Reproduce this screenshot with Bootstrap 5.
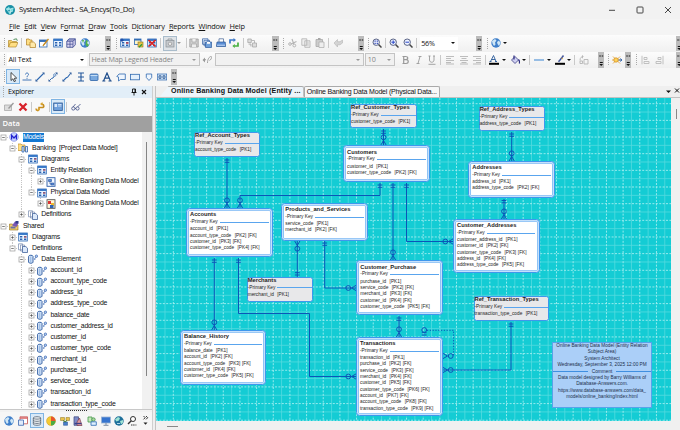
<!DOCTYPE html>
<html lang="en">
  <head>
    <meta charset="UTF-8" />
    <meta name="viewport" content="width=device-width, initial-scale=1.0" />
    <title>System Architect - SA_Encys(To_Do)</title>
    <link
      href="https://cdn.jsdelivr.net/npm/bootstrap@5.3.3/dist/css/bootstrap.min.css"
      rel="stylesheet"
    />
    <style>
      body {
        width: 680px;
        height: 430px;
        background: #f4f4f4;
        color: #111;
        font-family: "Open Sans", "Noto Sans", sans-serif;
        font-size: 7.6px;
        line-height: 1;
      }

      svg {
        display: block;
        flex: none;
      }

      .title-bar {
        height: 19px;
        padding-left: 5px;
        background: #f2f2f2;
        font-size: 7.75px;
        letter-spacing: -0.34px;
      }

      .window-buttons {
        gap: 18px;
        padding-right: 7px;
      }

      .menu-row {
        height: 16px;
        padding-left: 9px;
        gap: 4.2px;
        font-size: 7.4px;
        letter-spacing: -0.19px;
      }

      .menu-row u {
        text-underline-offset: 1px;
        text-decoration-thickness: 0.6px;
      }

      .tool-row {
        height: 16.5px;
        background: linear-gradient(#fcfcfc, #f0f0f0);
      }

      .tool-row.spaced {
        height: 17.5px;
        background: #f6f6f6;
      }

      .tool {
        flex: none;
      }

      .tool.picked,
      .tool.picked-gray {
        height: 13px;
        background: #d8e9f8;
        outline: 0.7px solid #7fb4e3;
      }

      .tool.picked-gray {
        background: #dfe3e7;
        outline-color: #a9bccb;
      }

      .grip {
        height: 11px;
        border-left: 1.2px dotted #a9a9a9;
      }

      .rule {
        height: 10px;
        border-left: 0.8px solid #c9c9c9;
      }

      .more {
        height: 15.5px;
        background: #bcbcbc;
      }

      .caret {
        border: 2px solid transparent;
        border-top: 2.6px solid #111;
        border-bottom: 0;
      }

      .caret.off {
        border-top-color: #999;
      }

      .combo {
        height: 13px;
        padding: 0 3px 0 1.5px;
        background: #fff;
        font-size: 7.2px;
        letter-spacing: -0.17px;
      }

      .combo.off {
        border: 0.8px solid #c4c4c4;
        background: #f1f1f1;
        color: #858585;
      }

      .explorer {
        width: 153px;
        border-right: 1px solid #cfcfcf;
      }

      .gutter {
        width: 3px;
        background: #efefef;
        border-right: 1px solid #c3c3c3;
      }

      .explorer-head {
        height: 12px;
        padding: 0 4px 0 3px;
        background: #e2eef8;
        font-size: 7.2px;
        letter-spacing: -0.3px;
      }

      .explorer-tools {
        height: 18px;
        background: #f8f8f8;
      }

      .data-head {
        height: 16px;
        padding-left: 2.5px;
        background: #a0a0a0;
        color: #fff;
        font-size: 7.6px;
        font-weight: 600;
      }

      .tree {
        height: 277px;
        background: #fff;
        font-family: "Liberation Sans", Arial, sans-serif;
        font-size: 6.9px;
        letter-spacing: -0.2px;
      }

      .tree-row {
        height: 11.13px;
        flex: none;
      }

      .guide,
      .knot {
        width: 9.2px;
        flex: none;
        height: 100%;
      }

      .tree-row .label {
        padding: 1px 0.3px;
      }

      .tree-row .icon-cell {
        padding-right: 3.4px;
      }

      .tree-row .label.chosen {
        background: #1479d2;
        color: #fff;
      }

      .tree-scroll {
        width: 10px;
        background: #f1f1f1;
        padding: 10px 0 0 4px;
      }

      .tree-scroll div {
        width: 1.2px;
        height: 234px;
        background: #858585;
      }

      .splitter {
        height: 3px;
        border-top: 0.8px solid #c8c8c8;
        background: #f2f2f2;
      }

      .splitter div {
        width: 21px;
        border-top: 1.4px dotted #333;
      }

      .module-bar {
        background: #f6f6f6;
      }

      .tab-strip {
        height: 12px;
        padding-left: 4px;
        background: #efefef;
        border-bottom: 1px solid #c2c2c2;
        font-family: "Liberation Sans", Arial, sans-serif;
        font-size: 7px;
      }

      .doc-tab {
        height: 11px;
        border: 0.8px solid #aaa;
        border-bottom: 0;
        border-radius: 2px 2px 0 0;
        background: #f8f8f8;
        white-space: nowrap;
        padding: 0 2px;
        letter-spacing: -0.19px;
      }

      .doc-tab.front {
        background: #eef5fb;
        border-left: 0;
        clip-path: polygon(9px 0, 100% 0, 100% 100%, 0 100%);
        padding-left: 11px;
        font-weight: 700;
        font-size: 7.1px;
        letter-spacing: 0.16px;
      }

      .board {
        width: 515px;
        height: 323px;
        background: #14ccd4;
        font-family: "Liberation Sans", Arial, sans-serif;
        overflow: hidden;
      }

      .side-strip {
        width: 9px;
        padding: 11px 0 0 4.5px;
        background: #f0f0f0;
      }

      .side-strip div {
        width: 1px;
        height: 10px;
        background: #888;
      }

      .foot-strip {
        background: #f0f0f0;
        padding: 5px 0 0 11px;
      }

      .foot-strip div {
        width: 11px;
        height: 1px;
        background: #888;
      }

      .entity {
        border: 0.8px solid #3f97ec;
        border-radius: 3.5px;
        background: #fff;
        box-shadow: inset 0 0 0 1.4px #c5e0fb, inset 0 0 0 2px #6cb0f2;
        padding: 2.6px 3.2px 0 3px;
        color: #1c1c1c;
        font-size: 4.75px;
        white-space: nowrap;
      }

      .entity.lookup {
        background: #e8e8ea;
        box-shadow: none;
        border-radius: 2.5px;
        padding: 0;
      }

      .entity.lookup .name {
        margin-top: -0.8px;
      }

      .entity .name {
        height: 7.9px;
        line-height: 7.9px;
        font-size: 5.75px;
        font-weight: 700;
      }

      .entity .key {
        height: 6.6px;
        line-height: 6.6px;
        font-size: 4.8px;
      }

      .entity .key::after {
        content: "";
        flex: 1;
        margin-left: 2px;
        border-top: 0.9px solid #5aa5ee;
      }

      .entity .field {
        height: 6.35px;
        line-height: 6.35px;
        word-spacing: 0.4px;
      }

      .entity .field:nth-child(3) {
        margin-top: 0.5px;
      }

      .note {
        border: 0.8px solid #58a2ea;
        background: #abcff8;
        font-size: 4.75px;
        line-height: 6.4px;
        color: #1e2f4c;
      }

      .note .divider::before,
      .note .divider::after {
        content: "";
        flex: 1;
        border-top: 0.9px solid #3f8fe0;
      }
    </style>
  </head>
  <body class="d-flex flex-column overflow-hidden m-0">
    <header>
      <div class="title-bar d-flex align-items-center justify-content-between">
        <div class="d-flex align-items-center">
          <svg class="me-1" width="10" height="10" viewBox="0 0 10 10"><circle cx="5" cy="5" r="5" fill="#188fa5"/><path d="M1 4L4 1.5 5 4 2.5 6zM5 4l3.5-1L8 6 5.5 7zM3 7l2.5 0L5 9.5z" fill="#7bdde0"/><path d="M1 4l4 0 3.500-1M5 4l.5 3L5 9.500M2.500 6L5.500 7 8 6" stroke="#e9ffff" stroke-width=".6" fill="none"/></svg>
          <span>System Architect - SA_Encys(To_Do)</span>
        </div>
        <div class="window-buttons d-flex align-items-center">
          <svg width="10" height="8" viewBox="0 0 10 8"><path d="M2 4.3h6" stroke="#333" stroke-width=".9"/></svg>
          <svg width="10" height="8" viewBox="0 0 10 8"><rect x="2" y="1" width="6" height="6" rx=".8" fill="none" stroke="#333" stroke-width=".9"/></svg>
          <svg width="10" height="8" viewBox="0 0 10 8"><path d="M2 1l6 6M8 1L2 7" stroke="#333" stroke-width=".9"/></svg>
        </div>
      </div>
      <nav class="menu-row d-flex align-items-center">
        <span><u>F</u>ile</span><span><u>E</u>dit</span><span><u>V</u>iew</span>
        <span>F<u>o</u>rmat</span><span><u>D</u>raw</span><span><u>T</u>ools</span>
        <span>D<u>i</u>ctionary</span><span><u>R</u>eports</span><span><u>W</u>indow</span><span><u>H</u>elp</span>
      </nav>
      <div class="tool-row d-flex align-items-center" data-tools="standard"></div>
      <div class="tool-row d-flex align-items-center" data-tools="format"></div>
      <div class="tool-row spaced d-flex align-items-center" data-tools="draw"></div>
    </header>

    <main class="d-flex flex-grow-1">
      <aside class="explorer d-flex flex-column">
        <div class="explorer-head d-flex align-items-center">
          <div class="grip"></div>
          <span class="ps-1">Explorer</span>
          <svg class="ms-auto" width="18" height="8" viewBox="0 0 18 8"><path d="M2.500 1h3v3.500h-3zM1.500 4.500h5M4 4.500V7.500M5 1v3.500" stroke="#111" stroke-width=".9" fill="none"/><path d="M12 2l4 4M16 2l-4 4" stroke="#111" stroke-width="1.1"/></svg>
        </div>
        <div class="explorer-tools d-flex align-items-center" data-tools="explorer"></div>
        <div class="data-head d-flex align-items-center">Data</div>
        <div class="tree d-flex">
          <div class="flex-grow-1 overflow-hidden" id="tree"></div>
          <div class="tree-scroll"><div></div></div>
        </div>
        <div class="splitter d-flex justify-content-center"><div></div></div>
        <div class="module-bar d-flex align-items-center flex-grow-1" data-tools="modules"></div>
      </aside>
      <div class="gutter"></div>
      <section class="flex-grow-1 d-flex flex-column">
        <div class="tab-strip d-flex align-items-end">
          <div class="doc-tab front d-flex align-items-center">Online Banking Data Model (Entity ...</div>
          <div class="doc-tab d-flex align-items-center">Online Banking Data Model (Physical Data...</div>
          <svg class="ms-auto align-self-center" width="17" height="8" viewBox="0 0 17 8"><path d="M3 3.500h5L5.500 6z" fill="#111"/><path d="M12 1.500l4 4M16 1.500l-4 4" stroke="#111" stroke-width="1"/></svg>
        </div>
        <div class="d-flex">
          <div class="board position-relative" id="board"></div>
          <div class="side-strip"><div></div></div>
        </div>
        <div class="foot-strip flex-grow-1"><div></div></div>
      </section>
    </main>

    <script src="https://cdn.jsdelivr.net/npm/bootstrap@5.3.3/dist/js/bootstrap.bundle.min.js"></script>
    <script>
      // every glyph is drawn in a 10x10 box
      const grid = '<rect x=".7" y="1" width="8.6" height="8" fill="#eaf4ff" stroke="#2866b4" stroke-width=".8"/><path d="M.7 2h8.6" stroke="#2a6fc4" stroke-width="1.8"/><path d="M2 4.8h2.3M6 4.8h2.3M2 7.3h2.3M6 7.3h2.3" stroke="#2b62b0" stroke-width="1.4"/>';
      const lens = '<path d="M6.3 6.3L9.5 9.5" stroke="#444" stroke-width="1.5"/><circle cx="4.2" cy="4.2" r="3.2" fill="#eef3ff" stroke="#4a5478" stroke-width=".9"/>';
      const globe = '<circle cx="5" cy="5" r="4.7" fill="#3f7fca"/><path d="M1 3l3-2 1.5 1.5L4 4.5l.5 2L3 8 1.5 5.5zM6 4l2-1.5L9.5 5 8 8 6.5 6z" fill="#cfe6f5"/>';
      const icons = {
        folder: '<path d="M.5 9V2.5h3l1 1h4V5" fill="#f3cf6b" stroke="#a97d1c" stroke-width=".6"/><path d="M.5 9l2-4.5H10L8 9z" fill="#ffdf85" stroke="#a97d1c" stroke-width=".6"/><path d="M5.5 1.5l3-.7.8 2" fill="none" stroke="#2f7a3a" stroke-width=".8"/>',
        copyFolder: '<path d="M.5 7V1h2.5l.8 1H6v5z" fill="#ffdf85" stroke="#b08022" stroke-width=".7"/><path d="M4 9.5V4h3.500l2 1.800v3.700z" fill="#ffe9a8" stroke="#b08022" stroke-width=".7"/>',
        edit: '<rect x=".5" y="2" width="7.5" height="7" fill="#fff" stroke="#2866b4" stroke-width=".8"/><path d="M.5 3h7.500" stroke="#2866b4" stroke-width="1.8"/><path d="M9.500 1L5 6.500 4 8" stroke="#c78a1c" stroke-width="1.3"/>',
        grid: grid,
        cube: '<path d="M.8 3.300L3 .8h6.300v6L7 9.300H.8z" fill="#d8d3f0" stroke="#39498f" stroke-width=".8"/><path d="M.8 3.300H7v6M7 3.300L9.300.8M4 3.300v6M.8 6.200H7M2 2h6.500" stroke="#39498f" stroke-width=".7" fill="none"/>',
        world: globe + '<path d="M6 2l2 1-1 2 2 2-2 2-1.500-2.500z" fill="#55b34a"/><path d="M2 2l2 0-1 3z" fill="#55b34a"/>',
        globe: globe,
        gridStar: grid + '<path d="M2 .5v3.500M.3 2.200h3.500" stroke="#1a3d9a" stroke-width=".9"/><path d="M6 5h2.500" stroke="#d33" stroke-width="1.2"/>',
        gridGo: '<rect x=".5" y="1" width="6.5" height="5.5" fill="#fff5c9" stroke="#2866b4" stroke-width=".8"/><path d="M.5 1.800h6.500" stroke="#2866b4" stroke-width="1.4"/><rect x="4" y="4" width="5" height="5" fill="#e7c44c" stroke="#8e7317" stroke-width=".6"/><path d="M5 9.300l3-3" stroke="#2d9a3a" stroke-width="1.3"/>',
        gridDrop: grid + '<path d="M1.500 2l7 6.500M8.500 2l-7 6.500" stroke="#d22" stroke-width="1.7"/>',
        camera: '<rect x="1" y="2.5" width="8" height="6.5" fill="#c6cace" stroke="#8b9298" stroke-width=".7"/><path d="M3 2.500V1h4v1.500" stroke="#8b9298" fill="none" stroke-width=".8"/><circle cx="5" cy="5.8" r="1.7" fill="#eee" stroke="#888" stroke-width=".6"/>',
        save: '<path d="M.8 1h8.400v8H.8z" fill="#cfcfcf" stroke="#9c9c9c" stroke-width=".8"/><path d="M3 1v3h4V1M2.500 9V6h5v3" fill="#eee" stroke="#9c9c9c" stroke-width=".6"/>',
        saveAll: '<path d="M.5.8h5.500v5.500H.5zM2 2.300h5.500v5.500H2z" fill="#e5effc" stroke="#2d5a9d" stroke-width=".7"/><path d="M3.500 4h6v5.500h-6z" fill="#6f9fd8" stroke="#2d5a9d" stroke-width=".7"/><path d="M5 4v1.800h3V4" fill="#fff"/>',
        print: '<path d="M3 4V.8h4.500V4" fill="#fff" stroke="#3d5f92" stroke-width=".7"/><path d="M1 4h8.200l.5 4.500H.4z" fill="#5b8fd6" stroke="#2b5796" stroke-width=".7"/><path d="M1 7.200h8" stroke="#ddecff" stroke-width=".8"/>',
        refresh: '<path d="M1 5.500V2h4" stroke="#3d78c8" stroke-width="1.7" fill="none"/><path d="M9 4.500V8H5.500" stroke="#48b040" stroke-width="1.7" fill="none"/><path d="M4.500 0l2.500 2-2.500 2z" fill="#3d78c8"/><path d="M5.800 6L3.300 8l2.500 2z" fill="#48b040"/>',
        parts: '<path d="M.8 1h3.500v3.500H.8zM5.500 5h4v4h-4zM1.500 6h2.500v2.500" fill="#ddd" stroke="#aaa" stroke-width=".8"/><path d="M4.500 2.500h3V5" stroke="#aaa" stroke-width=".8" fill="none"/>',
        cut: '<path d="M4 1l1.800 5M8.500 3.500L3 6" stroke="#b4b4b4" stroke-width="1.1"/><circle cx="6.3" cy="7.5" r="1.4" fill="none" stroke="#b4b4b4"/><circle cx="2" cy="6" r="1.3" fill="none" stroke="#b4b4b4"/>',
        copy: '<path d="M.8.8h5v6.500h-5zM3.800 2.800h5.200v6.500H3.800z" fill="#eee" stroke="#b0b0b0" stroke-width=".8"/><path d="M5 5h3M5 7h3" stroke="#bbb" stroke-width=".7"/>',
        paste: '<path d="M1 1.500h6.500v7H1z" fill="#ccc" stroke="#aaa" stroke-width=".8"/><path d="M3 .8h2.500" stroke="#999" stroke-width="1.3"/><path d="M4 4h5v5.500H4z" fill="#eee" stroke="#aaa" stroke-width=".7"/>',
        undo: '<path d="M1 5l3.500-3.500v2.200h2.500L9.500 2v3L7 6.800H4.500V9z" fill="#d4d4d4" stroke="#b5b5b5" stroke-width=".6"/>',
        zoomFit: lens + '<path d="M2.500 2.500h1.200v1.200H2.500zM4.700 2.500h1.200v1.200H4.700zM2.500 4.700h1.200v1.200H2.500zM4.700 4.700h1.200v1.200H4.700z" fill="#3046b8"/>',
        zoomIn: lens + '<path d="M2.400 4.200H6M4.200 2.400V6" stroke="#2946c8" stroke-width="1"/>',
        zoomOut: lens + '<path d="M2.400 4.200H6" stroke="#2946c8" stroke-width="1"/>',
        brush: '<path d="M.5 5l2.500-2.500v5zM3 4h1v2" fill="#999"/><path d="M5.500 8c0-4 2-6.500 3.500-6.500S9 5 7.500 5.500" fill="none" stroke="#999" stroke-width=".9"/>',
        bold: '<path d="M2.500 1.500h3c3 0 3 3.200 0 3.200h-2 2.500c3 0 3 3.800 0 3.800H2.500M3.700 1.500v7" fill="none" stroke="#9a9a9a" stroke-width="1.2"/>',
        italic: '<path d="M4.500 1.500h3M2.500 8.500h3M6 1.500l-2 7" stroke="#9a9a9a" stroke-width=".9"/>',
        underline: '<path d="M2.500 1v4c0 3 4.500 3 4.500 0V1M1.500 1h2M6 1h2M1.500 9.300h7" fill="none" stroke="#9a9a9a" stroke-width=".9"/>',
        alignLeft: '<path d="M1 1.500h8M1 3.500h5M1 5.500h8M1 7.500h5M1 9h8" stroke="#b5b5b5" stroke-width=".9"/>',
        alignMid: '<path d="M1 1.500h8M2.500 3.500h5M1 5.500h8M2.500 7.500h5M1 9h8" stroke="#b5b5b5" stroke-width=".9"/>',
        alignRight: '<path d="M1 1.500h8M4 3.500h5M1 5.500h8M4 7.500h5M1 9h8" stroke="#b5b5b5" stroke-width=".9"/>',
        fontColor: '<path d="M1.500 6.500L4.500.5l2.500 6M2.700 4.500h3.500M.5 6.500h2M6 6.500h2" stroke="#2a5a98" stroke-width=".9" fill="none"/><path d="M0 8.800h10" stroke="#000" stroke-width="2"/>',
        bucket: '<path d="M1.500 5l3.500-3.500L8.500 5 5 8.500z" fill="#cfd0f2" stroke="#3c3c80" stroke-width=".8"/><path d="M4 .5v4M8.500 4.500c1 1 1.200 2.500.8 4" stroke="#2c2c80" stroke-width="1.2" fill="none"/>',
        dash: '<path d="M0 5h10" stroke="#4a8fd6" stroke-width="1.1"/>',
        pen: '<path d="M8.500.5L5 5 3.500 6.800" stroke="#45579e" stroke-width="1.5"/><path d="M6.500 3l1.500 1" stroke="#e0b040"/><path d="M0 8.800h10" stroke="#000" stroke-width="2"/>',
        swap: '<path d="M1 5.500c0-3 1.500-4 3.500-4M3.500.3v3M5 4.500h4v4.500H5zM1 6h2.500v2.500H1z" fill="none" stroke="#b5b5b5" stroke-width=".9"/>',
        sun: '<path d="M1 1.500l7 7M8 1.500l-7 7M0 5h9" stroke="#e4a63a" stroke-width=".9"/><circle cx="4" cy="5" r="2.2" fill="#ffd35b" stroke="#cf861b" stroke-width=".7"/><path d="M6.500 5h3.500M8.300 3.500L10 5 8.300 6.500" stroke="#2a62b5" stroke-width=".9" fill="none"/>',
        dockLeft: '<path d="M1 .8v8.500M3 2.500h3v2H3zM3 6.500h5v2H3z" fill="none" stroke="#bbb" stroke-width=".9"/>',
        dockRight: '<path d="M9 .8v8.500M4 2.500h3v2H4zM2 6.500h5v2H2z" fill="none" stroke="#bbb" stroke-width=".9"/>',
        arrow: '<path d="M3 .5v8l1.900-1.700L6.200 9.700l1.300-.6L6.300 6.300l2.400-.2z" fill="#fff" stroke="#222" stroke-width=".8"/>',
        ask: '<path d="M3.500 2.500c0-2 3-2 3 0 0 1.300-1.500 1-1.500 2.500M5 5.800v1M.5 8h9" stroke="#2e68b0" stroke-width=".9" fill="none"/>',
        line: '<path d="M1.500 8.500l7-7" stroke="#2e68b0" stroke-width="1.1"/><path d="M.5 9.500V7.200l2.300 2.300zM9.500.5v2.300L7.200.5z" fill="#1f4f92"/>',
        lineOpen: '<path d="M1.500 8.500l2-2L5 6l2-3 1.500-1.500" stroke="#2e68b0" stroke-width="1" fill="none"/><circle cx="6.8" cy="3" r="1.2" fill="#fff" stroke="#2e68b0" stroke-width=".7"/><path d="M.5 9.500V7.200l2.300 2.300zM9.500.5v2.300L7.200.5z" fill="#1f4f92"/>',
        lineStep: '<path d="M1.500 8.500l3-3 1-.2 3-3.800" stroke="#2e68b0" stroke-width="1.1" fill="none"/><path d="M.5 9.500V7.200l2.300 2.300zM9.500.5v2.300L7.200.5z" fill="#1f4f92"/>',
        beam: '<path d="M2 1h6M2 5h6M2 9h6M5 1v8" stroke="#25589c" stroke-width="1.1"/>',
        rectFill: '<rect x="1" y="2" width="8" height="6.5" rx="1" fill="#7aa9de" stroke="#2b62a8" stroke-width=".8"/><path d="M1.500 3.500h7" stroke="#c7def5"/>',
        letter: '<path d="M1.500 9L5 1l3.500 8M2.800 6.200h4.500M.3 9h3M6.500 9h3.200" stroke="#1e4d8c" stroke-width="1.2" fill="none"/>',
        sheet: '<path d="M.8 4.500L3 2h6.300v5.500H4.500l-2 1.500V5z" fill="#eef5fd" stroke="#2e68b0" stroke-width=".8"/>',
        rectOpen: '<rect x=".5" y="2.3" width="9" height="5.5" fill="#e3effb" stroke="#2e68b0" stroke-width=".8"/>',
        shield: '<path d="M2.300 2h5.400v3.500L5 8.500 2.300 5.500z" fill="#eef5fd" stroke="#2e68b0" stroke-width=".8"/>',
        pair: '<rect x=".3" y="2" width="9.4" height="6" fill="#d5e5f7" stroke="#2e68b0" stroke-width=".7"/><path d="M2 3.800h2v2.500H2zM6 3.800h2v2.500H6z" fill="none" stroke="#1d4c8c" stroke-width=".8"/>',
        fieldEdit: '<path d="M.5 3h7v5.500h-7z" fill="#ddd" stroke="#a9a9a9" stroke-width=".8"/><path d="M9.500 1L4.500 6.500" stroke="#999" stroke-width="1.3"/>',
        cross: '<path d="M1.500 1.500l7 7M8.500 1.500l-7 7" stroke="#d8222a" stroke-width="2.3"/>',
        link: '<path d="M1 6.500c0 2.500 3 2.500 3 .5V5.500h3C9.500 5.500 9.500 2.500 7 2" fill="none" stroke="#c68d1f" stroke-width="1.5"/><path d="M7.500 0v4L5 2zM3 5.500l2 2-2.500 2z" fill="#dba52e"/>',
        panel: '<rect x=".7" y="1" width="8.6" height="7.5" fill="#6e9fdb" stroke="#2c5793" stroke-width=".8"/><path d="M5 2.500h3.500M5 4h3.500" stroke="#e4f0ff" stroke-width=".8"/><path d="M1.500 2h2.500v3h-2.500z" fill="#dbe9fa"/>',
        glasses: '<circle cx="2.3" cy="6.5" r="1.6" fill="none" stroke="#3d4c84" stroke-width=".8"/><circle cx="6.5" cy="6.5" r="1.6" fill="none" stroke="#3d4c84" stroke-width=".8"/><path d="M2 5L4.500 2M6.500 5l3-3M4 6.500h1" stroke="#3d4c84" stroke-width=".8"/>',
        models: '<circle cx="5" cy="5" r="4.3" fill="#c9d5ff" stroke="#6b78e0" stroke-width=".6"/><path d="M2.600 7.500V3.300L5 6l2.400-2.700v4.200" stroke="#2020d0" stroke-width="1.2" fill="none"/>',
        project: '<path d="M0 7.500V1h3l1 1h3v5.500z" fill="#ffdf85" stroke="#c2912d" stroke-width=".7"/><path d="M4 3.500h2v5.500H4zM7.500 3.500h2V9h-2z" fill="#dbeafc" stroke="#3465ac" stroke-width=".8"/>',
        diagram: grid + '<path d="M6 5h2.500" stroke="#d65050" stroke-width="1"/>',
        entityDoc: '<rect x="1" y=".7" width="8" height="8.6" fill="#f4f8ff" stroke="#2b5ca8" stroke-width=".9"/><path d="M2.500 2.500h3v2h-3zM5 6h2.800v2H5z" fill="#5c8edc" stroke="#22509b" stroke-width=".6"/><path d="M4 4.500V7h1" stroke="#22509b" stroke-width=".7" fill="none"/>',
        physicalDoc: '<rect x="1" y=".7" width="8" height="8.6" fill="#fff7d8" stroke="#444" stroke-width=".8"/><path d="M2 2h3v3H2z" fill="#d33"/><path d="M5 4h3v3H5z" fill="#f0b92e"/><path d="M4 6h3.500v3H4z" fill="#3064b4"/>',
        docs: '<path d="M.5.8h4v6h-4zM2.500 2h4v6h-4z" fill="#fff" stroke="#7488ad" stroke-width=".7"/><path d="M4.500 3.500h3.300l1.700 1.700v4.300h-5z" fill="#dce9fa" stroke="#44659d" stroke-width=".8"/>',
        shared: '<path d="M.5 9V3h3l1 1h4.500v5z" fill="#f2cc68" stroke="#937019" stroke-width=".6"/><path d="M3 4.500l3-4 3.500 1.500-2 4z" fill="#7a58b8"/><path d="M6.500 0h3v2.500h-3z" fill="#333c8a"/><path d="M1.500 5.500h5v2h-5z" fill="#6a6fa5"/>',
        element: '<path d="M.6 2.300c0-1.400 4.400-1.400 4.400 0v5.900c0 1.400-4.400 1.400-4.400 0z" fill="#dceafb" stroke="#24539c" stroke-width=".9"/><path d="M2.800 2.500v6" stroke="#7ea9de" stroke-width=".9"/><path d="M6.800 6V4.200l1.500-1" stroke="#4570b6" stroke-width=".9" fill="none"/><circle cx="8.4" cy="2.2" r="1.2" fill="#b9d0f3" stroke="#4570b6" stroke-width=".8"/>',
        calendar: '<path d="M2 .8h7.500v7H2z" fill="#fff" stroke="#c35050" stroke-width=".8"/><path d="M2 2h7.500" stroke="#d86262" stroke-width="1.5"/><path d="M.5 4h5v5.300h-5z" fill="#dfeafa" stroke="#3c68b0" stroke-width=".8"/>',
        stack: '<path d="M1.300 2c0-1.700 7.400-1.700 7.400 0v6c0 1.700-7.400 1.700-7.400 0z" fill="#eef2f5" stroke="#53606e" stroke-width=".8"/><path d="M1.300 2c0 1.500 7.400 1.500 7.400 0M1.300 4.200c0 1.500 7.400 1.500 7.400 0M1.300 6.300c0 1.500 7.400 1.500 7.400 0" fill="none" stroke="#53606e" stroke-width=".8"/>',
        pie: '<circle cx="5" cy="5" r="4.5" fill="#f5ca32" stroke="#b58a15" stroke-width=".4"/><path d="M5 5V.5A4.500 4.500 0 0 1 9.500 5z" fill="#e8542d"/><path d="M5 5h4.500A4.500 4.500 0 0 1 5 9.500z" fill="#4bab45"/>',
        flow: '<path d="M.5 1.500h4v3h-4zM6 1.500h3.500v3H6z" fill="#eac24a" stroke="#8b7420" stroke-width=".5"/><path d="M3.500 6h4v3.300h-4z" fill="#4a7ecb" stroke="#27508c" stroke-width=".5"/><path d="M3 4.500l2 1.500 2-1.500" stroke="#397d36" fill="none"/>',
        chart: '<path d="M1 .8h4.500v8.500H1z" fill="#7e8cc8" stroke="#39447c" stroke-width=".7"/><path d="M4 6l2.500-4L9 9.500H4z" fill="#dc9aa0" stroke="#7a3a4f" stroke-width=".7"/><path d="M1.500 7.500h7" stroke="#3b3f88" stroke-width="1.3"/>',
        users: '<path d="M1 1h4v5H1z" fill="#c8e9bd" stroke="#439846" stroke-width=".8"/><circle cx="6.5" cy="3.5" r="1.7" fill="#a8d8a0" stroke="#3a8b40" stroke-width=".7"/><path d="M4 5.800h5.300v3.500H4z" fill="#dff1ff" stroke="#3e77b9" stroke-width=".9"/>',
        monitor: '<rect x=".5" y="1" width="9" height="6" fill="#3674cf" stroke="#9ab3d4" stroke-width=".8"/><path d="M5 7v2M2.500 9.300h5" stroke="#7c8ca3" stroke-width="1"/>',
        earth: '<circle cx="5" cy="5" r="4.7" fill="#1e6f9a"/><path d="M1 3.500l3-2.500 2 1-1 2.500-2.500 1zM6 5l3-1v2.500L7 8.500z" fill="#9fe3d4"/><path d="M3 7.500h3" stroke="#d5f0ff" stroke-width=".8"/>',
        find: '<circle cx="6" cy="3" r="2.5" fill="#fff" stroke="#333" stroke-width="1"/><path d="M4.300 4.800L1 8" stroke="#333" stroke-width="1.4"/><path d="M4 9h5.500" stroke="#777" stroke-width="1.4" stroke-dasharray="1.2 .5"/>',
        chevrons: '<path d="M2.500 0l1.700 1.700-1.700 1.700M5 0l1.700 1.700L5 3.400" stroke="#222" stroke-width=".9" fill="none"/><path d="M2.500 6.500h4L4.500 8.700z" fill="#222"/>'
      };

      // [item, centre along the bar, text or state, width]
      const sizes = { grip: 1.2, rule: 0.8, more: 6.4, caret: 4, caretOff: 4 };
      const bars = {
        standard: [
          ["grip", 4.5], ["folder", 13], ["rule", 21.5], ["copyFolder", 30.5], ["edit", 43.5], ["grid", 57.5], ["cube", 70.5], ["world", 84.5],
          ["more", 108], ["grip", 116], ["gridStar", 125], ["gridGo", 138.5], ["gridDrop", 152], ["rule", 160], ["camera", 169.5, "picked-gray"], ["caretOff", 179],
          ["rule", 186], ["save", 194], ["saveAll", 207], ["print", 221], ["refresh", 234], ["rule", 242.5], ["parts", 251.5], ["more", 275],
          ["grip", 283], ["cut", 292], ["copy", 305.5], ["paste", 319.5], ["rule", 327.5], ["undo", 337], ["more", 360], ["grip", 367.5],
          ["zoomFit", 376.5], ["rule", 385], ["zoomIn", 393.5], ["zoomOut", 407.5], ["rule", 415.5], ["combo", 437.5, "56%", 38], ["more", 478],
          ["grip", 486], ["globe", 494.5], ["caret", 504], ["more", 678.5]
        ],
        format: [
          ["grip", 4.5], ["combo", 47, "All Text", 80], ["comboOff", 144.5, "Heat Map Legend Header", 111], ["brush", 207], ["comboOff", 289.5, "", 149],
          ["comboOff", 380, "10", 29.5], ["bold", 405], ["italic", 419], ["underline", 432], ["rule", 440.5], ["alignLeft", 450], ["alignMid", 463.5],
          ["alignRight", 477], ["rule", 485], ["fontColor", 494], ["caret", 503.5], ["bucket", 515], ["caret", 524], ["rule", 529.5], ["dash", 538.5],
          ["caret", 548], ["pen", 559], ["caret", 568.5], ["rule", 573.5], ["swap", 583], ["more", 600], ["grip", 608], ["sun", 616], ["more", 627.5],
          ["grip", 635.5], ["dockLeft", 645], ["dockRight", 658], ["more", 678.5]
        ],
        draw: [
          ["grip", 4.5], ["arrow", 13, "picked"], ["ask", 27], ["line", 40], ["lineOpen", 53.5], ["lineStep", 67], ["beam", 81], ["rectFill", 94.5],
          ["letter", 107.5], ["sheet", 121], ["rectOpen", 135], ["shield", 149], ["pair", 162.5], ["more", 174]
        ],
        explorer: [["fieldEdit", 9], ["cross", 22.5], ["rule", 31.5], ["link", 40], ["rule", 49], ["panel", 57.5, "picked"], ["rule", 66], ["glasses", 75]],
        modules: [
          ["globe", 9], ["calendar", 23], ["stack", 37, "picked"], ["pie", 51], ["flow", 64.5], ["chart", 77.5], ["users", 91.5],
          ["monitor", 105.5], ["earth", 118.5], ["find", 132], ["chevrons", 145.5]
        ]
      };

      function svg(name, size) {
        return `<svg width="${size}" height="${size}" viewBox="0 0 10 10">${icons[name]}</svg>`;
      }

      function toolItem([name, , text, comboWidth], width, gap) {
        const style = `style="width:${width}px;margin-left:${gap}px"`;
        if (comboWidth) {
          const off = name === "comboOff" ? "off" : "";
          return `<div class="combo tool ${off} d-flex align-items-center justify-content-between" ${style}><span>${text}</span><i class="caret ${off}"></i></div>`;
        }
        if (name === "more") {
          return `<div class="more tool" ${style}><svg width="6.4" height="15.5" viewBox="0 0 6.4 15.5"><path d="M1.3 4h1.5M3.7 4h1.5M1.8 10.5h3" stroke="#111" stroke-width="1"/><path d="M1.3 12h3.8l-1.9 2z" fill="#111"/></svg></div>`;
        }
        if (name.startsWith("caret")) {
          return `<i class="caret tool ${name === "caretOff" ? "off" : ""}" ${style}></i>`;
        }
        if (name in sizes) return `<div class="${name} tool" ${style}></div>`;
        return `<div class="tool d-flex align-items-center justify-content-center ${text || ""}" ${style}>${svg(name, 10)}</div>`;
      }

      document.querySelectorAll("[data-tools]").forEach((bar) => {
        let end = 0;
        bars[bar.dataset.tools].forEach((item) => {
          const width = item[3] || sizes[item[0]] || (item[2] ? 12.5 : 10);
          const start = item[1] - width / 2;
          bar.insertAdjacentHTML("beforeend", toolItem(item, width, start - end));
          end = start + width;
        });
      });

      // [level, icon, label, open]
      const tree = [
        [0, "models", "Models", true],
        [1, "project", "Banking&nbsp; [Project Data Model]", true],
        [2, "diagram", "Diagrams", true],
        [3, "diagram", "Entity Relation", true],
        [4, "entityDoc", "Online Banking Data Model"],
        [3, "diagram", "Physical Data Model", true],
        [4, "physicalDoc", "Online Banking Data Model"],
        [2, "docs", "Definitions"],
        [0, "shared", "Shared", true],
        [1, "diagram", "Diagrams"],
        [1, "docs", "Definitions", true],
        [2, "element", "Data Element", true],
        ...[
          "account_id", "account_type_code", "address_id", "address_type_code", "balance_date", "customer_address_id", "customer_id",
          "customer_type_code", "merchant_id", "purchase_id", "service_code", "transaction_id", "transaction_type_code"
        ].map((name) => [3, "element", name])
      ];

      function continues(index, level) {
        for (const [next] of tree.slice(index + 1)) {
          if (next < level) return false;
          if (next === level) return true;
        }
        // Data Element and its fields go on below the visible part
        return level > 1;
      }

      tree.forEach(([level, icon, label, open], i) => {
        let cells = "";
        for (let k = 0; k < level; k++) {
          const path = continues(i, k) && k > 0 ? '<path d="M3.5 0v11.13" stroke="#aaa" stroke-width=".7" stroke-dasharray="1 1"/>' : "";
          cells += `<svg class="guide" viewBox="0 0 9.2 11.13">${path}</svg>`;
        }
        const top = level ? 0 : 5.5;
        const bottom = level && continues(i, level) ? 11.13 : 5.5;
        cells += `<svg class="knot" viewBox="0 0 9.2 11.13"><path d="M3.5 ${top}V${bottom}M5 5.5h4.2" stroke="#aaa" stroke-width=".7" stroke-dasharray="1 1"/><rect x="1" y="3" width="5" height="5" fill="#fff" stroke="#999" stroke-width=".7"/><path d="M2.2 5.5h2.6${open ? "" : "M3.5 4.2v2.6"}" stroke="#444" stroke-width=".7"/></svg>`;
        document.getElementById("tree").insertAdjacentHTML(
          "beforeend",
          `<div class="tree-row d-flex align-items-center text-nowrap">${cells}<span class="icon-cell">${svg(icon, 10)}</span><span class="label ${i ? "" : "chosen"}">${label}</span></div>`
        );
      });

      // board coordinates start at the window's 156, 97
      const X0 = 156;
      const Y0 = 97;
      const entities = [
        { name: "Ref_Account_Types", box: [194, 131.7, 66, 25], lookup: true, fields: ["account_type_code"] },
        { name: "Ref_Customer_Types", box: [350, 103.7, 66.5, 24.3], lookup: true, fields: ["customer_type_code"] },
        { name: "Ref_Address_Types", box: [478.7, 105.5, 66.5, 25], lookup: true, fields: ["address_type_code"] },
        { name: "Customers", box: [343, 144.5, 87, 37], fields: ["customer_id", "customer_type_code+"] },
        { name: "Addresses", box: [468.3, 160, 87, 37.7], fields: ["address_id", "address_type_code+"] },
        { name: "Accounts", box: [186, 207.3, 86.7, 49.3], fields: ["account_id", "account_type_code+", "customer_id+", "customer_type_code+"] },
        { name: "Products_and_Services", box: [281.3, 202, 86.7, 38], fields: ["service_code", "merchant_id+"] },
        { name: "Merchants", box: [246.7, 276, 66.6, 25], lookup: true, fields: ["merchant_id"] },
        { name: "Customer_Addresses", box: [453, 218, 86.5, 54.7], fields: ["customer_address_id", "customer_id+", "customer_type_code+", "address_id+", "address_type_code+"] },
        { name: "Customer_Purchase", box: [356.3, 259.5, 86.5, 55.2], fields: ["purchase_id", "service_code+", "merchant_id+", "customer_id+", "customer_type_code+"] },
        { name: "Ref_Transaction_Types", box: [473.5, 295.7, 75, 25], lookup: true, fields: ["transaction_type_code"] },
        { name: "Balance_History", box: [180, 329, 86, 55.3], fields: ["balance_date", "account_id+", "account_type_code+", "customer_id+", "customer_type_code+"] },
        {
          name: "Transactions",
          box: [356, 336, 87, 79.3],
          fields: ["transaction_id", "purchase_id+", "service_code+", "merchant_id+", "customer_id+", "customer_type_code+", "account_id+", "account_type_code+", "transaction_type_code+"]
        }
      ];

      const links = [
        "M227 157V207", "M380 182V194.5H240V207", "M393 182V259", "M406.5 182V240.5H453", "M383.5 128V144", "M511.7 131V160",
        "M504 198V218", "M214.3 257V329", "M238.5 257V312.5H309.5V375.5H356", "M297.3 240V276", "M324.7 240V287H356",
        "M399 315V336", "M511 321V369H443"
      ];
      // one-side ticks and many-side feet: [x, y of the entity edge, dx, dy away from it]
      const ticks = [
        [227, 157, 0, 1], [380, 182, 0, 1], [393, 182, 0, 1], [406.5, 182, 0, 1], [383.5, 128, 0, 1], [511.7, 131, 0, 1], [504, 197.5, 0, 1],
        [214.3, 257, 0, 1], [238.5, 257, 0, 1], [297.3, 276, 0, -1], [324.7, 240, 0, 1], [399, 315, 0, 1], [511, 321, 0, 1], [424.2, 336, 0, -1]
      ];
      const feet = [
        [227, 207, 0, -1], [240, 207, 0, -1], [393, 259, 0, -1], [453, 240.5, -1, 0], [383.5, 144, 0, -1], [511.7, 160, 0, -1], [504, 218, 0, -1],
        [214.3, 329, 0, -1], [356, 375.5, -1, 0], [297.3, 240, 0, 1], [356, 287, -1, 0], [399, 336, 0, -1], [443, 369, 1, 0], [443, 355, 1, 0]
      ];

      function gridLines() {
        let solid = "";
        let dashed = "";
        for (let k = -1; k < 31; k++) {
          const x = 173.3 + k * 16.66;
          const y = 102.7 + k * 16.66;
          dashed += `M${x} 97V420M156 ${y}H671`;
          solid += `M${x + 8.33} 97V420M156 ${y + 8.33}H671`;
        }
        return `<path d="${solid}" stroke="#56dbe0" stroke-width=".8"/><path d="${dashed}" stroke="#a4eef0" stroke-width=".9" stroke-dasharray="2 1.4"/>`;
      }

      function drawLinks() {
        const tick = ([x, y, dx, dy]) =>
          [2, 4.3].map((d) => `M${x + dx * d - dy * 2.4} ${y + dy * d - dx * 2.4}l${dy * 4.8} ${dx * 4.8}`).join("");
        const foot = ([x, y, dx, dy]) => `M${x + dx * 4.5} ${y + dy * 4.5}L${x - dy * 2.6} ${y - dx * 2.6}M${x + dx * 4.5} ${y + dy * 4.5}L${x + dy * 2.6} ${y + dx * 2.6}`;
        const ring = ([x, y, dx, dy]) => `<circle cx="${x + dx * 7.7}" cy="${y + dy * 7.7}" r="2.4"/>`;
        return `<g fill="none" stroke="#0b55b8" stroke-width="1"><path d="${links.join("")}${ticks.map(tick).join("")}${feet.map(foot).join("")}"/>
          ${feet.map(ring).join("")}<circle cx="424.2" cy="329" r="2.4"/><path d="M427 329.3H453.6V355" stroke-dasharray="1.2 1.6"/></g>`;
      }

      const board = document.getElementById("board");
      board.innerHTML = `<svg width="515" height="323" viewBox="${X0} ${Y0} 515 323">${gridLines()}${drawLinks()}</svg>`;

      function place([x, y, w, h]) {
        return `style="left:${x - X0}px;top:${y - Y0}px;width:${w}px;height:${h}px"`;
      }

      entities.forEach((e) => {
        const fields = e.fields.map((f, i) => {
          const foreign = f.endsWith("+") ? " [FK]" : "";
          return `<div class="field">${f.replace("+", "")}&nbsp; [PK${i + 1}]${foreign}</div>`;
        });
        board.insertAdjacentHTML(
          "beforeend",
          `<div class="entity position-absolute ${e.lookup ? "lookup" : ""}" ${place(e.box)}>
            <div class="name">${e.name}</div>
            <div class="key d-flex align-items-center">-Primary Key</div>
            ${fields.join("")}
          </div>`
        );
      });

      board.insertAdjacentHTML(
        "beforeend",
        `<div class="note position-absolute text-center text-nowrap" ${place([552.3, 341.5, 99.5, 65.5])}>
          Online Banking Data Model (Entity Relation<br />Subject Area)<br />System Architect<br />Wednesday, September 3, 2025 12:00 PM
          <div class="divider d-flex align-items-center"><span class="px-1">Comment</span></div>
          Data model designed by Barry Williams of<br />Database-Answers.com.<br />https://www.database-answers.com/data_<br />models/online_banking/index.html
        </div>`
      );
    </script>
  </body>
</html>
